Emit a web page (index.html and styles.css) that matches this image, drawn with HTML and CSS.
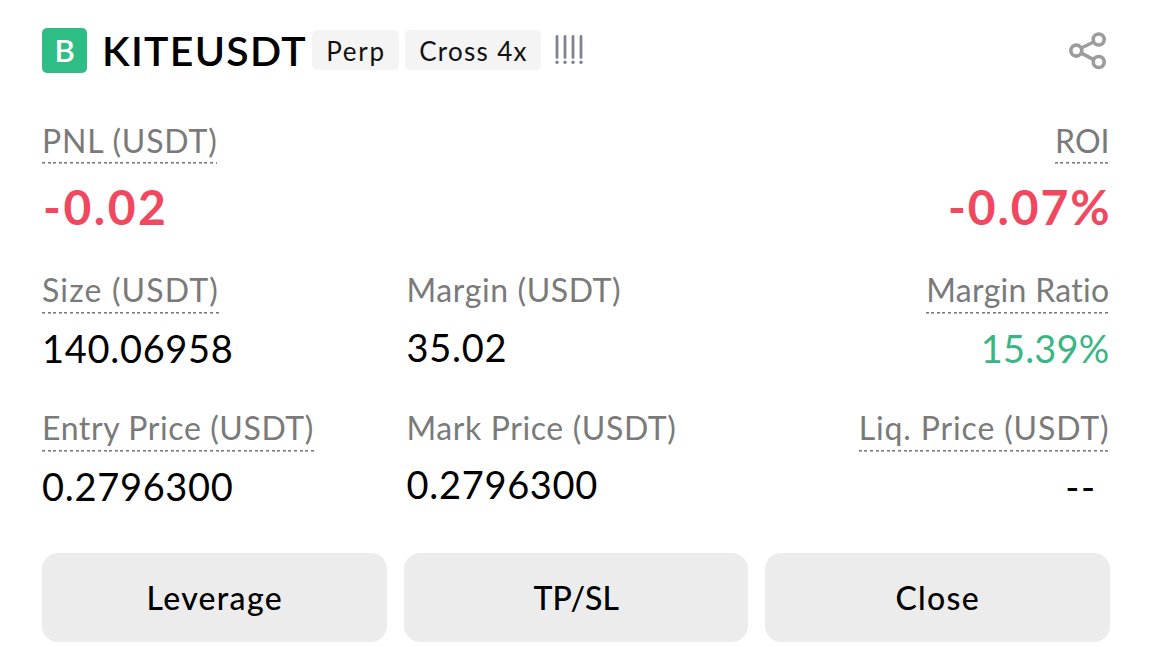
FILE: index.html
```html
<!DOCTYPE html>
<html lang="en">
<head>
  <meta charset="UTF-8" />
  <meta name="viewport" content="width=device-width, initial-scale=1" />
  <title>KITEUSDT Position</title>
  <link rel="stylesheet" href="styles.css">
</head>
<body>
  <div class="position">
    <div class="header">
      <span class="side">B</span>
      <span class="symbol">KITEUSDT</span>
      <span class="tag tag-perp">Perp</span>
      <span class="tag tag-cross">Cross 4x</span>
      <svg class="level" width="30" height="32" viewBox="0 0 30 32">
        <g stroke="#7d8491" stroke-width="2.8" stroke-linecap="round">
          <path d="M3 1.4V22.6M11 1.4V22.6M19 1.4V22.6M27 1.4V22.6" />
        </g>
        <g fill="#7d8491">
          <circle cx="3" cy="27.3" r="1.7" />
          <circle cx="11" cy="27.3" r="1.7" />
          <circle cx="19" cy="27.3" r="1.7" />
          <circle cx="27" cy="27.3" r="1.7" />
        </g>
      </svg>
      <svg class="share" width="40" height="40" viewBox="0 0 40 40">
        <g fill="none" stroke="#9c9c9c" stroke-width="3.6">
          <circle cx="6.3" cy="19.6" r="5.5" />
          <circle cx="28.7" cy="8.5" r="5.5" />
          <circle cx="28.7" cy="31" r="5.5" />
          <path d="M11.3 17L23.7 11M11.3 22.2L23.7 28.6" />
        </g>
      </svg>
    </div>

    <div class="row pnl">
      <div class="cell">
        <div class="label dashed w-pnl">PNL (USDT)</div>
        <div class="value loss">-0.02</div>
      </div>
      <div class="cell right">
        <div class="label dashed">ROI</div>
        <div class="value loss roi">-0.07%</div>
      </div>
    </div>

    <div class="row size">
      <div class="cell">
        <div class="label dashed w-size">Size (USDT)</div>
        <div class="value">140.06958</div>
      </div>
      <div class="cell middle">
        <div class="label">Margin (USDT)</div>
        <div class="value">35.02</div>
      </div>
      <div class="cell right">
        <div class="label dashed w-ratio">Margin Ratio</div>
        <div class="value gain">15.39%</div>
      </div>
    </div>

    <div class="row price">
      <div class="cell">
        <div class="label dashed">Entry Price (USDT)</div>
        <div class="value">0.2796300</div>
      </div>
      <div class="cell middle">
        <div class="label">Mark Price (USDT)</div>
        <div class="value">0.2796300</div>
      </div>
      <div class="cell right">
        <div class="label dashed w-liq">Liq. Price (USDT)</div>
        <div class="value empty">--</div>
      </div>
    </div>

    <div class="actions">
      <button>Leverage</button>
      <button class="tpsl">TP/SL</button>
      <button>Close</button>
    </div>
  </div>
</body>
</html>
```
FILE: styles.css
```css
* {
  box-sizing: border-box;
}
body {
  margin: 0;
  background-color: #fff;
  color: #000;
  font-family: Lato, sans-serif;
}
.position {
  height: 647px;
  padding: 28px 42.5px 0 42px;
  overflow: hidden;
}
.header {
  display: flex;
  align-items: center;
  height: 45px;
}
.side {
  width: 45px;
  height: 45px;
  border-radius: 5px;
  background-color: #2ebd85;
  color: #fff;
  font-size: 31px;
  font-weight: 600;
  line-height: 44px;
  text-align: center;
}
.symbol {
  width: 210px;
  margin-left: 15px;
  font-size: 41px;
  font-weight: 600;
  line-height: 48px;
  letter-spacing: 1.3px;
  white-space: nowrap;
}
.tag {
  height: 40px;
  margin-bottom: 1px;
  border-radius: 5px;
  background-color: #f4f4f4;
  color: #111;
  font-size: 26px;
  line-height: 42px;
  letter-spacing: 1.3px;
  text-align: center;
  white-space: nowrap;
}
.tag-perp {
  width: 87px;
  padding-left: 1px;
  letter-spacing: 1.7px;
}
.tag-cross {
  width: 136px;
  margin-left: 6px;
  padding-left: 1px;
}
.level {
  margin-left: 13px;
}
.share {
  margin-left: auto;
  overflow: visible;
}
.row {
  display: grid;
  grid-template-columns: 364.5px 1fr auto;
}
.pnl {
  grid-template-columns: 1fr auto;
  height: 150px;
  margin-top: 47px;
}
.size {
  height: 137.5px;
}
.price {
  height: 145.5px;
}
.cell {
  display: flex;
  flex-direction: column;
  align-items: flex-start;
}
.right {
  align-items: flex-end;
}
.label {
  height: 44px;
  color: #7a7a7a;
  font-size: 32px;
  line-height: 40px;
  letter-spacing: 0.6px;
  white-space: nowrap;
}
.pnl .label {
  line-height: 41px;
  letter-spacing: 0;
}
.pnl .w-pnl {
  letter-spacing: 0.8px;
}
.w-size {
  letter-spacing: 1.15px;
}
.w-ratio {
  letter-spacing: 0.3px;
}
.w-liq {
  letter-spacing: 0.85px;
}
.dashed {
  background: repeating-linear-gradient(to right, #7a7a7a 0 3px, transparent 3px 5.6px) bottom / 100% 1.6px no-repeat;
}
.value {
  margin-top: 11px;
  font-size: 38px;
  line-height: 46px;
  letter-spacing: 0.7px;
  white-space: nowrap;
}
.middle .value {
  margin-top: 9.5px;
}
.loss {
  margin-top: 14px;
  padding-left: 1px;
  color: #f0485f;
  font-size: 48px;
  font-weight: 700;
  line-height: 58px;
  letter-spacing: 2.5px;
}
.roi {
  margin-right: -2px;
  letter-spacing: 1.9px;
}
.gain {
  color: #3bb584;
  letter-spacing: 0.2px;
}
.empty {
  padding-right: 13px;
  letter-spacing: 1.5px;
}
.actions {
  display: grid;
  grid-template-columns: repeat(3, 1fr);
  gap: 17px;
}
button {
  height: 89px;
  padding: 0 0 0 1px;
  border: none;
  border-radius: 16px;
  background-color: #ececec;
  color: #000;
  font-family: inherit;
  font-size: 32px;
  font-weight: 500;
  line-height: 40px;
  letter-spacing: 1.3px;
}
.tpsl {
  letter-spacing: 0;
}
```
